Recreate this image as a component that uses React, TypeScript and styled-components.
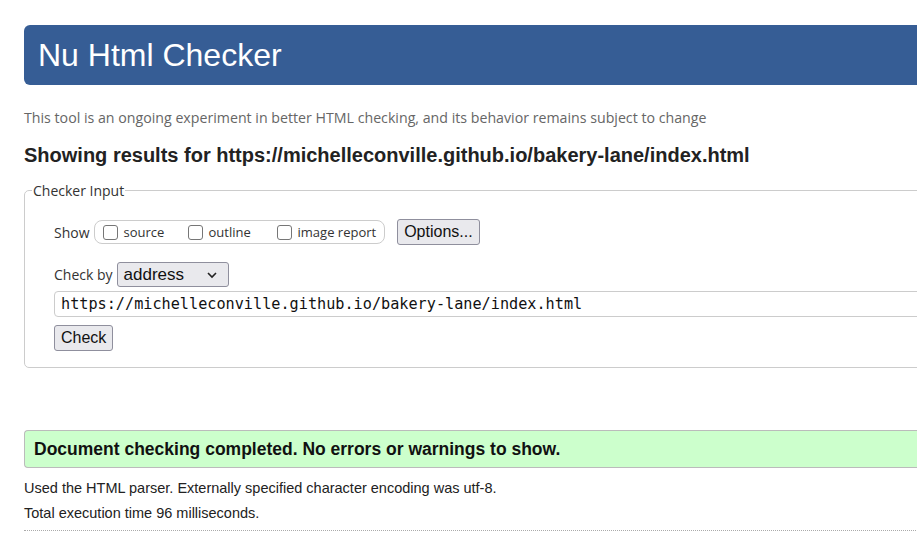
import React, { useState } from 'react'
import styled, { createGlobalStyle } from 'styled-components'

const GlobalStyle = createGlobalStyle`
  html, body {
    margin: 0;
    padding: 0;
    background: #fff;
    overflow: hidden;
  }
  body {
    font-family: 'Open Sans', 'Noto Sans', sans-serif;
    color: #222;
  }
`

const Page = styled.div`
  width: 1200px;
  padding: 25px 0 0 24px;
`

const Banner = styled.h1`
  margin: 0;
  height: 60px;
  display: flex;
  align-items: center;
  padding-left: 14px;
  background: #365d95;
  border-radius: 6px 0 0 6px;
  color: #fff;
  font-family: 'Liberation Sans', Arial, sans-serif;
  font-weight: normal;
  font-size: 32px;
`

const Intro = styled.p`
  margin: 23px 0 0;
  font-size: 14.2px;
  line-height: 20px;
  color: #666;
`

const ResultsFor = styled.h2`
  margin: 15px 0 0;
  font-family: 'Liberation Sans', Arial, sans-serif;
  font-weight: bold;
  font-size: 20px;
  line-height: 24px;
  color: #222;
`

const Fieldset = styled.fieldset`
  margin: 14px 0 0;
  padding: 15px 29px 16px;
  border: 1px solid #ccc;
  border-radius: 5px 0 0 5px;
  font-size: 14px;
`

const Legend = styled.legend`
  padding: 0 1px;
  margin-left: -22px;
  font-size: 14px;
  color: #333;
`

const Row = styled.div<{ $gap?: number }>`
  display: flex;
  align-items: center;
  margin-top: ${p => p.$gap ?? 0}px;
`

const Label = styled.span`
  font-size: 14px;
  color: #333;
  margin-right: 4px;
`

const ToggleGroup = styled.div`
  display: flex;
  align-items: center;
  height: 22px;
  padding: 0 8px 0 8px;
  border: 1px solid #ccc;
  border-radius: 8px;
  margin-right: 12px;
`

const Toggle = styled.label<{ $width?: number }>`
  display: flex;
  align-items: center;
  width: ${p => (p.$width ? `${p.$width}px` : 'auto')};
  font-size: 13px;
  color: #333;
  cursor: pointer;
`

const Box = styled.span`
  width: 13px;
  height: 13px;
  border: 1px solid #767676;
  border-radius: 3px;
  margin-right: 6px;
  background: #fff;
`

const Button = styled.button`
  font-family: 'Liberation Sans', Arial, sans-serif;
  font-size: 16px;
  color: #111;
  background: #e9e9ed;
  border: 1px solid #8f8f9d;
  border-radius: 3px;
  padding: 4px 6px;
  line-height: 16px;
`

const Select = styled.div`
  display: flex;
  align-items: center;
  justify-content: space-between;
  width: 112px;
  height: 25px;
  box-sizing: border-box;
  padding: 0 10px 0 6px;
  background: #e9e9ed;
  border: 1px solid #8f8f9d;
  border-radius: 3px;
  font-family: 'Liberation Sans', Arial, sans-serif;
  font-size: 17px;
  color: #111;
`

const UrlInput = styled.input`
  display: block;
  width: 100%;
  box-sizing: border-box;
  height: 26px;
  margin-top: 4px;
  padding: 0 6px;
  border: 1px solid #ccc;
  border-radius: 4px 0 0 4px;
  font-family: 'DejaVu Sans Mono', 'Liberation Mono', monospace;
  font-size: 15.2px;
  color: #111;
  outline: none;
`

const Notice = styled.div`
  margin-top: 62px;
  height: 36px;
  display: flex;
  align-items: center;
  padding-left: 9px;
  background: #ccffcc;
  border: 1px solid #bbb;
  border-right: none;
  border-radius: 4px 0 0 4px;
  font-family: 'Liberation Sans', Arial, sans-serif;
  font-weight: bold;
  font-size: 17.5px;
  color: #111;
`

const Detail = styled.p<{ $first?: boolean }>`
  margin: ${p => (p.$first ? '8px' : '0')} 0 0;
  font-family: 'Liberation Sans', Arial, sans-serif;
  font-size: 14.5px;
  line-height: 25px;
  color: #222;
`

const Rule = styled.hr`
  margin: 4px 0 0;
  border: none;
  border-top: 1px dotted #aaa;
`

const Chevron = () => (
  <svg width="12" height="8" viewBox="0 0 12 8">
    <path d="M2 2l4 4 4-4" fill="none" stroke="#222" strokeWidth="1.6" />
  </svg>
)

export default function App() {
  const [url, setUrl] = useState('https://michelleconville.github.io/bakery-lane/index.html')

  return (
    <>
      <GlobalStyle />
      <Page>
        <Banner>Nu Html Checker</Banner>
        <Intro>This tool is an ongoing experiment in better HTML checking, and its behavior remains subject to change</Intro>
        <ResultsFor>Showing results for https://michelleconville.github.io/bakery-lane/index.html</ResultsFor>
        <Fieldset>
          <Legend>Checker Input</Legend>
          <Row $gap={4}>
            <Label>Show</Label>
            <ToggleGroup>
              <Toggle $width={85}>
                <Box />
                source
              </Toggle>
              <Toggle $width={89}>
                <Box />
                outline
              </Toggle>
              <Toggle>
                <Box />
                image report
              </Toggle>
            </ToggleGroup>
            <Button>Options...</Button>
          </Row>
          <Row $gap={17}>
            <Label>Check by</Label>
            <Select>
              address
              <Chevron />
            </Select>
          </Row>
          <UrlInput value={url} onChange={e => setUrl(e.target.value)} />
          <Row $gap={8}>
            <Button>Check</Button>
          </Row>
        </Fieldset>
        <Notice>Document checking completed. No errors or warnings to show.</Notice>
        <Detail $first>Used the HTML parser. Externally specified character encoding was utf-8.</Detail>
        <Detail>Total execution time 96 milliseconds.</Detail>
        <Rule />
      </Page>
    </>
  )
}
